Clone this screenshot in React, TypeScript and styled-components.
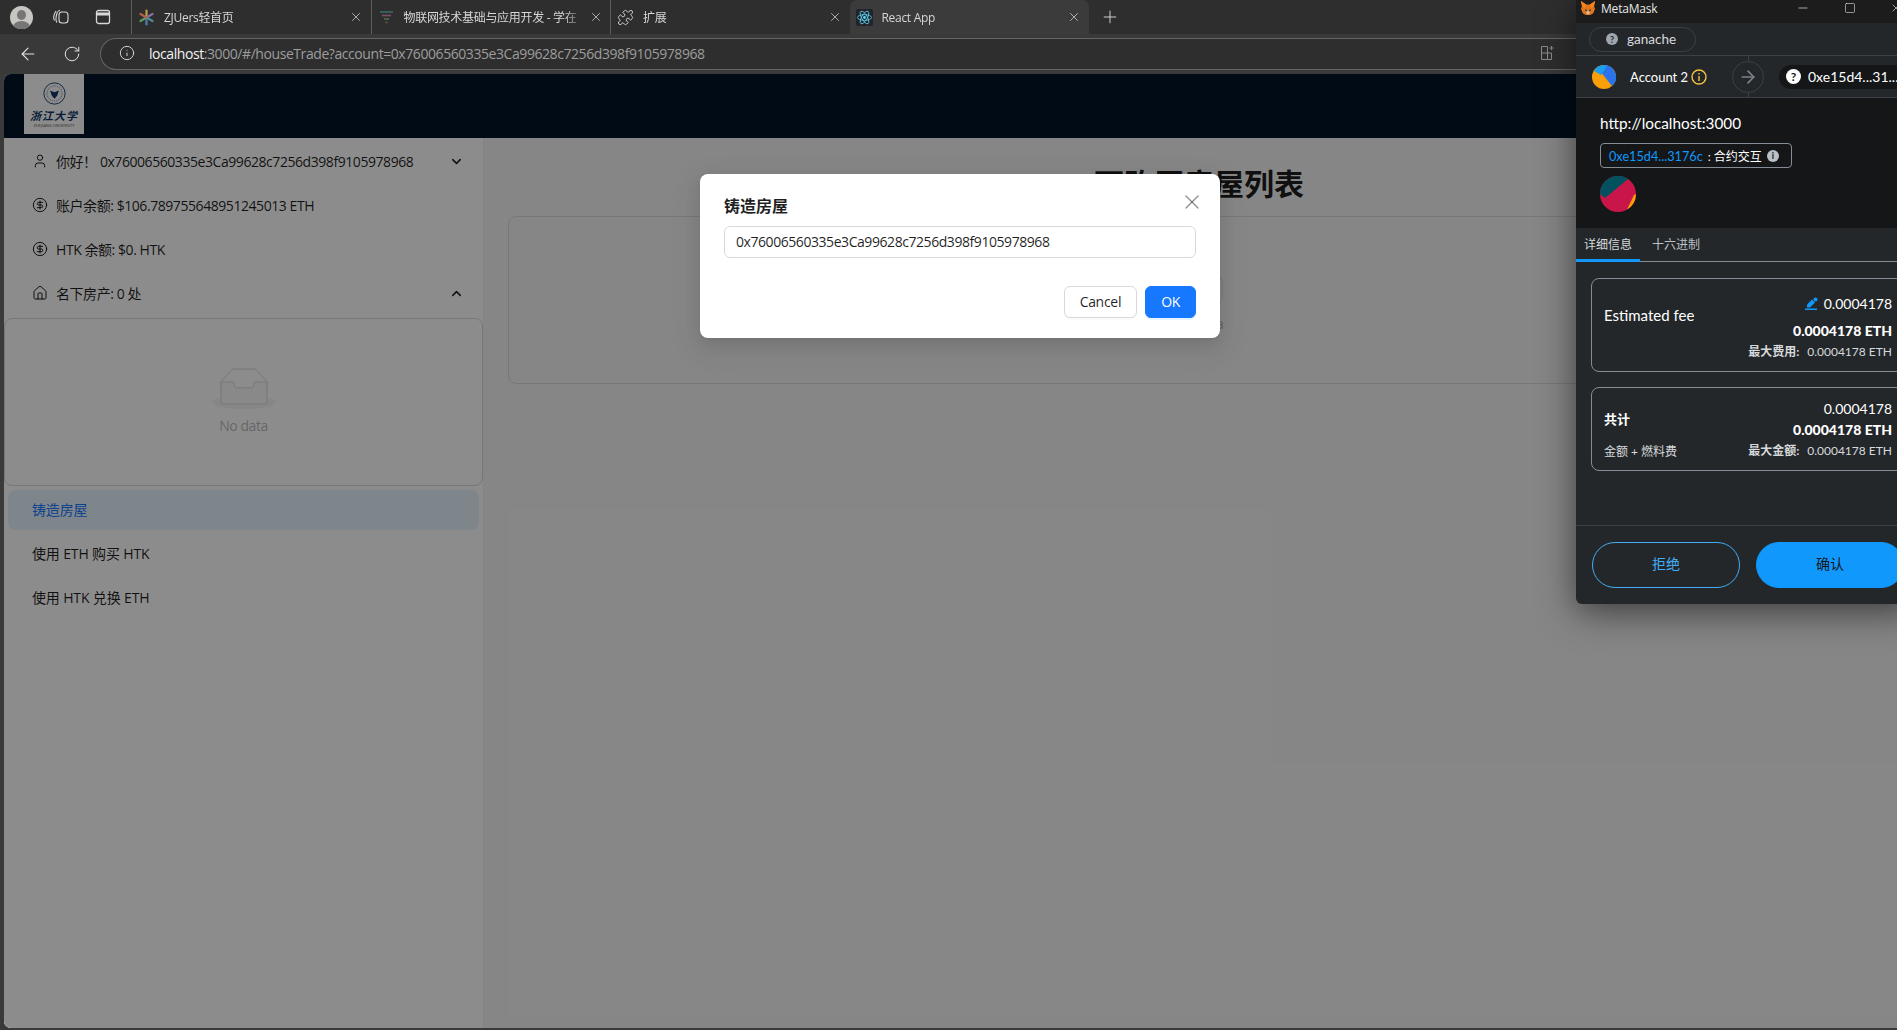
import React from "react";
import styled, { createGlobalStyle } from "styled-components";
import {
  ArrowLeft,
  ChevronDown,
  ChevronUp,
  CircleDollarSign,
  House,
  Info,
  Minus,
  Plus,
  Puzzle,
  RotateCw,
  Square,
  User,
  X,
} from "lucide-react";

const ACCOUNT = "0x76006560335e3Ca99628c7256d398f9105978968";
const CJK = '"Noto Sans CJK SC"';
const UI_FONT = `"Open Sans", ${CJK}, sans-serif`;
const MM_FONT = `"Lato", ${CJK}, sans-serif`;

const GlobalStyle = createGlobalStyle`
  html, body {
    margin: 0;
    padding: 0;
    background: #3a3a3a;
    overflow: hidden;
  }
  * {
    box-sizing: border-box;
  }
`;

const Desktop = styled.div`
  position: relative;
  display: flex;
  flex-direction: column;
  width: 1897px;
  height: 1030px;
  overflow: hidden;
  background: #3a3a3a;
  font-family: ${UI_FONT};
`;

/* browser chrome */
const TabStrip = styled.div`
  display: flex;
  align-items: stretch;
  height: 34px;
  background: #2e2e2e;
`;

const StripControls = styled.div`
  display: flex;
  align-items: center;
  flex: none;
  width: 131px;
  padding-left: 10px;
  color: #d8d8d8;
`;

const Avatar = styled.div`
  position: relative;
  flex: none;
  width: 23px;
  height: 23px;
  border-radius: 50%;
  background: #c8c6c2;
  overflow: hidden;
  margin-right: 19px;

  &::before {
    content: "";
    position: absolute;
    left: 7px;
    top: 4px;
    width: 9px;
    height: 10px;
    border-radius: 50%;
    background: #767676;
  }

  &::after {
    content: "";
    position: absolute;
    left: 3px;
    top: 15px;
    width: 17px;
    height: 12px;
    border-radius: 50%;
    background: #767676;
  }
`;

const StripIcon = styled.svg`
  width: 18px;
  height: 18px;
  margin-right: 24px;
  flex: none;
`;

const Tab = styled.div<{ $active?: boolean }>`
  position: relative;
  display: flex;
  align-items: center;
  flex: none;
  width: 239.5px;
  padding-left: 6px;
  background: ${(p) => (p.$active ? "#3b3b3b" : "transparent")};
  border-left: ${(p) => (p.$active ? "none" : "1px solid #5c5c5c")};
  border-radius: ${(p) => (p.$active ? "7px 7px 0 0" : "0")};
  color: #d6d6d6;
  font-size: 12px;
  letter-spacing: -0.3px;
`;

const Favicon = styled.svg`
  width: 17px;
  height: 17px;
  flex: none;
  margin-right: 9px;
`;

const TabLabel = styled.span`
  width: 182px;
  white-space: nowrap;
  overflow: hidden;
  mask-image: linear-gradient(to right, #000 88%, transparent);
`;

const TabClose = styled.span`
  display: flex;
  margin-left: 3px;
  color: #c8c8c8;
`;

const NewTab = styled.span`
  display: flex;
  align-items: center;
  margin-left: 11px;
  color: #dcdcdc;
`;

const Toolbar = styled.div`
  display: flex;
  align-items: center;
  height: 40px;
  padding: 4px 0 5px 18px;
  background: #393939;
  color: #e6e6e6;
`;

const NavButton = styled.span`
  display: flex;
  width: 45px;
`;

const AddressBar = styled.div`
  display: flex;
  align-items: center;
  flex: 1;
  height: 32px;
  margin-left: -8px;
  padding: 0 20px 1px 18px;
  border: 1px solid #656565;
  border-right: none;
  border-radius: 16px 0 0 16px;
  background: #2e2e2e;
  font-size: 14px;
  letter-spacing: -0.43px;
  color: #9d9d9d;
`;

const Host = styled.span`
  color: #f2f2f2;
  margin-left: 14px;
`;

const SplitIcon = styled.svg`
  width: 16px;
  height: 18px;
  margin-left: 834px;
`;

/* the page behind the modal */
const Page = styled.div`
  position: relative;
  display: flex;
  flex-direction: column;
  flex: 1;
  margin: 0 0 2px 4px;
  border-radius: 7px 0 0 7px;
  overflow: hidden;
  background: #f5f5f5;
  color: rgba(0, 0, 0, 0.88);
  font-size: 14px;
  letter-spacing: -0.44px;
`;

const Header = styled.header`
  display: flex;
  height: 64px;
  flex: none;
  padding-left: 20px;
  background: #001529;
`;

const Logo = styled.div`
  display: flex;
  flex-direction: column;
  align-items: center;
  width: 60px;
  height: 60px;
  padding-top: 8px;
  background: #fff;
  color: #10386b;
`;

const LogoName = styled.span`
  margin-top: 3px;
  font-family: "Noto Sans CJK SC", sans-serif;
  font-size: 11px;
  line-height: 15px;
  font-weight: 700;
  font-style: italic;
  letter-spacing: 1px;
`;

const LogoSub = styled.span`
  font-size: 4px;
  line-height: 5px;
  letter-spacing: 0;
  color: #555;
`;

const Body = styled.div`
  display: flex;
  flex: 1;
`;

const Sidebar = styled.aside`
  width: 479px;
  flex: none;
  padding-top: 4px;
  background: #fff;
`;

const MenuItem = styled.div<{ $selected?: boolean; $split?: boolean }>`
  display: flex;
  align-items: center;
  height: 40px;
  margin: ${(p) => (p.$split ? "4px 4px 0" : "0 4px 4px")};
  padding: 0 15px ${(p) => (p.$split ? "3px" : "2px")} 24px;
  border-radius: 8px;
  background: ${(p) => (p.$selected ? "#e6f4ff" : "transparent")};
  color: ${(p) => (p.$selected ? "#1677ff" : "inherit")};
  letter-spacing: ${(p) => (p.$split ? "-0.15px" : "inherit")};
  white-space: pre;

  & > svg:first-child {
    margin-right: 8px;
  }
`;

const Caret = styled.span`
  display: flex;
  margin-left: auto;
`;

const EmptyBox = styled.div`
  display: flex;
  flex-direction: column;
  align-items: center;
  justify-content: center;
  height: 168px;
  border: 1px solid #d9d9d9;
  border-radius: 8px;
  color: rgba(0, 0, 0, 0.3);
`;

const EmptyText = styled.span`
  margin-top: 6px;
  line-height: 22px;
`;

const Content = styled.main`
  flex: 1;
  padding: 22px 7px 0 24px;
  border-left: 1px solid #f0f0f0;
`;

const Heading = styled.h1`
  height: 48px;
  margin: 0 0 8px;
  font-size: 30px;
  line-height: 48px;
  font-weight: 700;
  letter-spacing: 0;
  text-align: center;
`;

const Mask = styled.div`
  position: absolute;
  inset: 0;
  display: flex;
  justify-content: center;
  align-items: flex-start;
  padding: 100px 0 0 19px;
  background: rgba(0, 0, 0, 0.45);
`;

const Modal = styled.div`
  position: relative;
  width: 520px;
  padding: 20px 24px;
  border-radius: 8px;
  background: #fff;
  box-shadow: 0 6px 16px rgba(0, 0, 0, 0.08), 0 3px 6px -4px rgba(0, 0, 0, 0.12),
    0 9px 28px 8px rgba(0, 0, 0, 0.05);
`;

const ModalTitle = styled.div`
  height: 24px;
  margin-bottom: 8px;
  font-size: 16px;
  line-height: 24px;
  font-weight: 600;
  letter-spacing: 0;
`;

const ModalClose = styled.span`
  position: absolute;
  top: 16px;
  right: 16px;
  display: flex;
  color: rgba(0, 0, 0, 0.45);
`;

const ModalInput = styled.div`
  display: flex;
  align-items: center;
  height: 32px;
  padding: 0 11px 2px;
  border: 1px solid #d9d9d9;
  border-radius: 6px;
`;

const ModalFooter = styled.div`
  display: flex;
  justify-content: flex-end;
  gap: 8px;
  margin-top: 28px;
`;

const Button = styled.button<{ $primary?: boolean }>`
  height: 32px;
  padding: 0 15px 2px;
  border: 1px solid ${(p) => (p.$primary ? "#1677ff" : "#d9d9d9")};
  border-radius: 6px;
  background: ${(p) => (p.$primary ? "#1677ff" : "#fff")};
  color: ${(p) => (p.$primary ? "#fff" : "rgba(0, 0, 0, 0.88)")};
  box-shadow: 0 2px 0
    ${(p) => (p.$primary ? "rgba(5, 145, 255, 0.1)" : "rgba(0, 0, 0, 0.02)")};
  font: inherit;
  letter-spacing: -0.3px;
`;

/* metamask popup */
const Wallet = styled.section`
  position: absolute;
  top: 0;
  left: 1576px;
  display: flex;
  flex-direction: column;
  width: 340px;
  height: 604px;
  border-radius: 0 0 0 6px;
  background: #24272a;
  box-shadow: 0 8px 36px rgba(0, 0, 0, 0.55);
  color: #fff;
  font-family: ${MM_FONT};
  overflow: hidden;
`;

const TitleBar = styled.div`
  display: flex;
  align-items: center;
  height: 23px;
  flex: none;
  padding: 0 14px 7px 4px;
  background: #1c1c1c;
  font-family: ${UI_FONT};
  font-size: 12px;
  letter-spacing: -0.2px;
  color: #e8e8e8;
`;

const WindowControls = styled.div`
  display: flex;
  align-items: center;
  gap: 34px;
  margin-left: auto;
`;

const NetworkRow = styled.div`
  display: flex;
  align-items: center;
  height: 33px;
  flex: none;
  padding-left: 13px;
  border-bottom: 1px solid #3b4046;
`;

const NetworkPill = styled.div`
  display: flex;
  align-items: center;
  gap: 9px;
  width: 107px;
  height: 25px;
  padding-left: 16px;
  border: 1px solid #3b4046;
  border-radius: 13px;
  font-size: 13.5px;
  color: #d6d9dc;
`;

const Badge = styled.span<{ $size: number; $bg: string; $fg: string; $gap?: number }>`
  display: inline-flex;
  align-items: center;
  justify-content: center;
  flex: none;
  width: ${(p) => p.$size}px;
  height: ${(p) => p.$size}px;
  margin-left: ${(p) => p.$gap ?? 0}px;
  border-radius: 50%;
  background: ${(p) => p.$bg};
  color: ${(p) => p.$fg};
  font-size: ${(p) => p.$size - 3}px;
  font-weight: 700;
`;

const AccountRow = styled.div`
  position: relative;
  display: flex;
  align-items: center;
  height: 42px;
  flex: none;
  padding-left: 16px;
  border-bottom: 1px solid #3b4046;
  font-size: 13px;

  &::before {
    content: "";
    position: absolute;
    left: 172px;
    top: 0;
    bottom: 0;
    width: 1px;
    background: #3b4046;
  }
`;

const AccountName = styled.span`
  margin-left: 14px;
  margin-right: 4px;
  width: 57px;
  white-space: nowrap;
`;

const ArrowCircle = styled.span`
  position: relative;
  display: flex;
  align-items: center;
  justify-content: center;
  width: 32px;
  height: 32px;
  margin: 0 15px 0 25px;
  border: 1px solid #3b4046;
  border-radius: 50%;
  background: #24272a;
  color: #7a828c;

  svg {
    transform: scaleX(-1);
  }
`;

const RecipientPill = styled.div`
  display: flex;
  align-items: center;
  gap: 7px;
  flex: 1;
  height: 24px;
  padding-left: 7px;
  border-radius: 12px 0 0 12px;
  background: #141618;
  font-size: 14px;
  white-space: nowrap;
`;

const Origin = styled.div`
  display: flex;
  flex-direction: column;
  align-items: flex-start;
  height: 130px;
  flex: none;
  padding: 15px 0 0 24px;
  background: #141618;
`;

const OriginUrl = styled.div`
  height: 20px;
  font-size: 15.3px;
  line-height: 20px;
`;

const ContractBox = styled.div`
  display: flex;
  align-items: center;
  width: 192px;
  height: 25px;
  margin-top: 10px;
  padding: 0 8px;
  border: 1px solid #848c96;
  border-radius: 4px;
  font-size: 12px;
  white-space: nowrap;
`;

const ContractLink = styled.span`
  color: #1098fc;
  font-size: 12.7px;
  margin-right: 5px;
`;

const Blockie = styled.svg`
  width: 36px;
  height: 36px;
  margin-top: 8px;
`;

const TabRow = styled.div`
  display: flex;
  height: 34px;
  flex: none;
  border-bottom: 1px solid #848c96;
  font-size: 12px;
  line-height: 34px;
  color: #bbc0c5;
`;

const WalletTab = styled.span<{ $active?: boolean }>`
  width: ${(p) => (p.$active ? "64px" : "72px")};
  text-align: center;
  height: 34px;
  border-bottom: ${(p) => (p.$active ? "3px solid #1098fc" : "none")};
  color: ${(p) => (p.$active ? "#d6d9dc" : "#bbc0c5")};
`;

const Details = styled.div`
  display: flex;
  flex-direction: column;
  gap: 15px;
  height: 264px;
  flex: none;
  padding: 16px 12px 0 15px;
  border-bottom: 1px solid #3b4046;
`;

const FeeCard = styled.div<{ $height: number }>`
  display: flex;
  justify-content: space-between;
  align-items: stretch;
  height: ${(p) => p.$height}px;
  padding: 0 11px 0 12px;
  border: 1px solid #848c96;
  border-radius: 8px;
`;

const FeeLabels = styled.div<{ $top: number; $wide?: boolean }>`
  display: flex;
  flex-direction: column;
  padding-top: ${(p) => p.$top}px;
  font-size: ${(p) => (p.$wide ? "15px" : "14px")};
  line-height: 22px;
`;

const FeeLabelBold = styled.span`
  font-weight: 700;
  font-size: 13px;
`;

const FeeHint = styled.span`
  margin-top: 11px;
  font-size: 12px;
  color: #d6d9dc;
`;

const FeeValues = styled.div<{ $top: number }>`
  display: flex;
  flex-direction: column;
  align-items: flex-end;
  padding-top: ${(p) => p.$top}px;
`;

const FeeLine = styled.div`
  display: flex;
  align-items: center;
  gap: 6px;
  height: 22px;
  font-size: 14px;
`;

const FeeStrong = styled.div<{ $gap: number }>`
  height: 22px;
  margin-top: ${(p) => p.$gap}px;
  font-size: 14px;
  line-height: 22px;
  font-weight: 900;
`;

const FeeMax = styled.div`
  display: flex;
  gap: 8px;
  height: 20px;
  font-size: 12px;
  line-height: 20px;
  color: #d6d9dc;
`;

const FeeMaxLabel = styled.span`
  font-weight: 700;
`;

const WalletFooter = styled.div`
  display: flex;
  gap: 16px;
  padding: 16px 12px 0 16px;
`;

const WalletButton = styled.div<{ $primary?: boolean }>`
  display: flex;
  align-items: center;
  justify-content: center;
  width: 148px;
  height: 46px;
  padding-bottom: 4px;
  border: 1px solid ${(p) => (p.$primary ? "#1098fc" : "#43aef5")};
  border-radius: 23px;
  background: ${(p) => (p.$primary ? "#1098fc" : "transparent")};
  color: ${(p) => (p.$primary ? "#141618" : "#43aef5")};
  font-size: 14px;
`;

const FoxSvg = styled.svg`
  margin-right: 5px;
  flex: none;
`;

function EmptyState() {
  return (
    <EmptyBox>
      <svg width="64" height="41" viewBox="0 0 64 41">
        <g transform="translate(0 1)" fill="none" fillRule="evenodd">
          <ellipse fill="#f5f5f5" cx="32" cy="33" rx="32" ry="7" />
          <g fillRule="nonzero" stroke="#d9d9d9">
            <path d="M55 12.76L44.854 1.258C44.367.474 43.656 0 42.907 0H21.093c-.749 0-1.46.474-1.947 1.257L9 12.761V22h46v-9.24z" />
            <path
              d="M41.613 15.931c0-1.605.994-2.93 2.227-2.931H55v18.137C55 33.26 53.68 35 52.05 35h-40.1C10.32 35 9 33.259 9 31.137V13h11.16c1.233 0 2.227 1.323 2.227 2.928v.022c0 1.605 1.005 2.901 2.237 2.901h14.752c1.232 0 2.237-1.308 2.237-2.913v-.007z"
              fill="#fafafa"
            />
          </g>
        </g>
      </svg>
      <EmptyText>No data</EmptyText>
    </EmptyBox>
  );
}

function BrowserTab(props: {
  icon: React.ReactNode;
  label: string;
  active?: boolean;
}) {
  return (
    <Tab $active={props.active}>
      {props.icon}
      <TabLabel>{props.label}</TabLabel>
      <TabClose>
        <X size={14} strokeWidth={1.4} />
      </TabClose>
    </Tab>
  );
}

function BrowserChrome() {
  return (
    <>
      <TabStrip>
        <StripControls>
          <Avatar />
          <StripIcon viewBox="0 0 18 18" fill="none" stroke="currentColor" strokeWidth="1.1">
            <rect x="7" y="4" width="9" height="11" rx="3" />
            <path d="M5 14.5C3.5 13 4 8 5.5 3.5M8 2.5l-2 .8M2.5 12.5C1 10 2 6 4 3" />
          </StripIcon>
          <StripIcon viewBox="0 0 18 18" fill="none" stroke="currentColor" strokeWidth="1.3">
            <rect x="2.5" y="2.5" width="13" height="13" rx="2" />
            <path d="M2.5 6h13" strokeWidth="3" />
          </StripIcon>
        </StripControls>
        <BrowserTab
          label="ZJUers轻首页"
          icon={
            <Favicon viewBox="0 0 17 17" strokeWidth="2.2" strokeLinecap="round">
              <path d="M8.5 8.5V1.5" stroke="#b7a24a" />
              <path d="M8.5 8.5l6-3.5" stroke="#8a6fa8" />
              <path d="M8.5 8.5l6 3.5" stroke="#4c8f9c" />
              <path d="M8.5 8.5v7" stroke="#4f7fb5" />
              <path d="M8.5 8.5l-6 3.5" stroke="#5d9a5d" />
              <path d="M8.5 8.5L2.5 5" stroke="#b5604f" />
            </Favicon>
          }
        />
        <BrowserTab
          label="物联网技术基础与应用开发 - 学在"
          icon={
            <Favicon viewBox="0 0 17 17" strokeWidth="1.6">
              <path d="M2 3h13" stroke="#3c6a6a" />
              <path d="M4 6.5h9" stroke="#7a4f6a" />
              <path d="M6 10h5" stroke="#4f6f4f" />
              <path d="M7.5 13.5h2" stroke="#6a5a3c" />
            </Favicon>
          }
        />
        <BrowserTab
          label="扩展"
          icon={
            <Favicon as="span">
              <Puzzle size={17} strokeWidth={1.3} />
            </Favicon>
          }
        />
        <BrowserTab
          active
          label="React App"
          icon={
            <Favicon viewBox="-12 -12 24 24" fill="none" stroke="#61dafb" strokeWidth="1.1">
              <rect x="-12" y="-12" width="24" height="24" fill="#20232a" stroke="none" rx="3" />
              <circle r="2" fill="#61dafb" stroke="none" />
              <ellipse rx="10" ry="4" />
              <ellipse rx="10" ry="4" transform="rotate(60)" />
              <ellipse rx="10" ry="4" transform="rotate(120)" />
            </Favicon>
          }
        />
        <NewTab>
          <Plus size={20} strokeWidth={1.1} />
        </NewTab>
      </TabStrip>
      <Toolbar>
        <NavButton>
          <ArrowLeft size={20} strokeWidth={1.3} />
        </NavButton>
        <NavButton>
          <RotateCw size={18} strokeWidth={1.3} />
        </NavButton>
        <AddressBar>
          <Info size={16} strokeWidth={1.3} color="#e6e6e6" />
          <Host>localhost</Host>
          :3000/#/houseTrade?account={ACCOUNT}
          <SplitIcon viewBox="0 0 16 18" fill="none" stroke="#8a8a8a" strokeWidth="1">
            <path d="M2.5 2.5h6v13h-6zM2.5 9h10v6.5h-4M12.5 2v4M10.5 4h4" />
          </SplitIcon>
        </AddressBar>
      </Toolbar>
    </>
  );
}

function DappPage() {
  return (
    <Page>
      <Header>
        <Logo>
          <svg width="23" height="23" viewBox="0 0 26 26" fill="none" stroke="currentColor">
            <circle cx="13" cy="13" r="12" strokeWidth="1" />
            <circle cx="13" cy="13" r="8.5" strokeWidth="0.6" strokeDasharray="1.5 1" />
            <path d="M8 9.5l5 2.2 5-2.2-2 6-3 3.5-3-3.5z" fill="currentColor" stroke="none" />
          </svg>
          <LogoName>浙江大学</LogoName>
          <LogoSub>ZHEJIANG UNIVERSITY</LogoSub>
        </Logo>
      </Header>
      <Body>
        <Sidebar>
          <MenuItem>
            <User size={16} strokeWidth={1.5} />
            {`你好！ ${ACCOUNT}`}
            <Caret>
              <ChevronDown size={15} strokeWidth={2.4} />
            </Caret>
          </MenuItem>
          <MenuItem>
            <CircleDollarSign size={16} strokeWidth={1.5} />
            账户余额: $106.789755648951245013 ETH
          </MenuItem>
          <MenuItem>
            <CircleDollarSign size={16} strokeWidth={1.5} />
            HTK 余额: $0. HTK
          </MenuItem>
          <MenuItem>
            <House size={16} strokeWidth={1.5} />
            名下房产: 0 处
            <Caret>
              <ChevronUp size={15} strokeWidth={2.4} />
            </Caret>
          </MenuItem>
          <EmptyState />
          <MenuItem $split $selected>
            铸造房屋
          </MenuItem>
          <MenuItem $split>使用 ETH 购买 HTK</MenuItem>
          <MenuItem $split>使用 HTK 兑换 ETH</MenuItem>
        </Sidebar>
        <Content>
          <Heading>可购买房屋列表</Heading>
          <EmptyState />
        </Content>
      </Body>
      <Mask>
        <Modal>
          <ModalTitle>铸造房屋</ModalTitle>
          <ModalClose>
            <X size={24} strokeWidth={1.3} />
          </ModalClose>
          <ModalInput>{ACCOUNT}</ModalInput>
          <ModalFooter>
            <Button>Cancel</Button>
            <Button $primary>OK</Button>
          </ModalFooter>
        </Modal>
      </Mask>
    </Page>
  );
}

function FoxIcon() {
  return (
    <FoxSvg width="16" height="16" viewBox="0 0 16 16">
      <path d="M1 1l5 3.5h4L15 1l-1 5 1 3-2 4.5-3 1.5H6l-3-1.5L1 9l1-3z" fill="#e2761b" />
      <path d="M5 9l2 1-1 2zM11 9l-2 1 1 2z" fill="#233447" />
      <path d="M6 12l2 3 2-3-2-1z" fill="#d7c1b3" />
      <path d="M1 1l5 3.5L5 8 2 6zM15 1l-5 3.5L11 8l3-2z" fill="#f6851b" />
    </FoxSvg>
  );
}

function FeeAmount(props: { strong: string; maxLabel: string; gap: number }) {
  return (
    <>
      <FeeStrong $gap={props.gap}>{props.strong}</FeeStrong>
      <FeeMax>
        <FeeMaxLabel>{props.maxLabel}</FeeMaxLabel>
        <span>0.0004178 ETH</span>
      </FeeMax>
    </>
  );
}

function MetaMaskPopup() {
  return (
    <Wallet>
      <TitleBar>
        <FoxIcon />
        MetaMask
        <WindowControls>
          <Minus size={14} strokeWidth={1.2} />
          <Square size={12} strokeWidth={1.2} />
          <X size={12} strokeWidth={1.3} />
        </WindowControls>
      </TitleBar>
      <NetworkRow>
        <NetworkPill>
          <Badge $size={12} $bg="#9fa6ae" $fg="#24272a">?</Badge>
          ganache
        </NetworkPill>
      </NetworkRow>
      <AccountRow>
        <svg width="24" height="24" viewBox="0 0 24 24">
          <circle cx="12" cy="12" r="12" fill="#f99f0a" />
          <path d="M12 0a12 12 0 0 1 8 21L8 6z" fill="#2a73e8" />
          <path d="M12 0A12 12 0 0 0 2 6l7 4 6-9z" fill="#1a9ff0" />
        </svg>
        <AccountName>Account 2</AccountName>
        <svg width="16" height="16" viewBox="0 0 16 16" fill="none" stroke="#f6c343" strokeWidth="1.4">
          <circle cx="8" cy="8" r="7" />
          <path d="M8 7v5M8 4v1.5" />
        </svg>
        <ArrowCircle>
          <ArrowLeft size={20} strokeWidth={2} />
        </ArrowCircle>
        <RecipientPill>
          <Badge $size={15} $bg="#ffffff" $fg="#141618">?</Badge>
          0xe15d4...31...
        </RecipientPill>
      </AccountRow>
      <Origin>
        <OriginUrl>http://localhost:3000</OriginUrl>
        <ContractBox>
          <ContractLink>0xe15d4...3176c</ContractLink>: 合约交互
          <Badge $size={12} $bg="#bbc0c5" $fg="#141618" $gap={5}>i</Badge>
        </ContractBox>
        <Blockie viewBox="0 0 36 36">
          <circle cx="18" cy="18" r="18" fill="#c8164a" />
          <path d="M0 18A18 18 0 0 1 28 3L5 22z" fill="#03515f" />
          <path d="M36 18a18 18 0 0 1-9 15.5L34 19z" fill="#f99f0a" />
        </Blockie>
      </Origin>
      <TabRow>
        <WalletTab $active>详细信息</WalletTab>
        <WalletTab>十六进制</WalletTab>
      </TabRow>
      <Details>
        <FeeCard $height={94}>
          <FeeLabels $top={25} $wide>Estimated fee</FeeLabels>
          <FeeValues $top={13}>
            <FeeLine>
              <svg width="13" height="13" viewBox="0 0 13 13" fill="#1098fc">
                <path d="M7 2.5l3 3L5 10.5H2v-3z" />
                <circle cx="10.5" cy="2.5" r="2" />
                <rect x="0" y="11.5" width="12" height="1.5" />
              </svg>
              0.0004178
            </FeeLine>
            <FeeAmount strong="0.0004178 ETH" maxLabel="最大费用:" gap={6} />
          </FeeValues>
        </FeeCard>
        <FeeCard $height={84}>
          <FeeLabels $top={20}>
            <FeeLabelBold>共计</FeeLabelBold>
            <FeeHint>金额 + 燃料费</FeeHint>
          </FeeLabels>
          <FeeValues $top={9}>
            <FeeLine>0.0004178</FeeLine>
            <FeeAmount strong="0.0004178 ETH" maxLabel="最大金额:" gap={0} />
          </FeeValues>
        </FeeCard>
      </Details>
      <WalletFooter>
        <WalletButton>拒绝</WalletButton>
        <WalletButton $primary>确认</WalletButton>
      </WalletFooter>
    </Wallet>
  );
}

export default function App() {
  return (
    <Desktop>
      <GlobalStyle />
      <BrowserChrome />
      <DappPage />
      <MetaMaskPopup />
    </Desktop>
  );
}
